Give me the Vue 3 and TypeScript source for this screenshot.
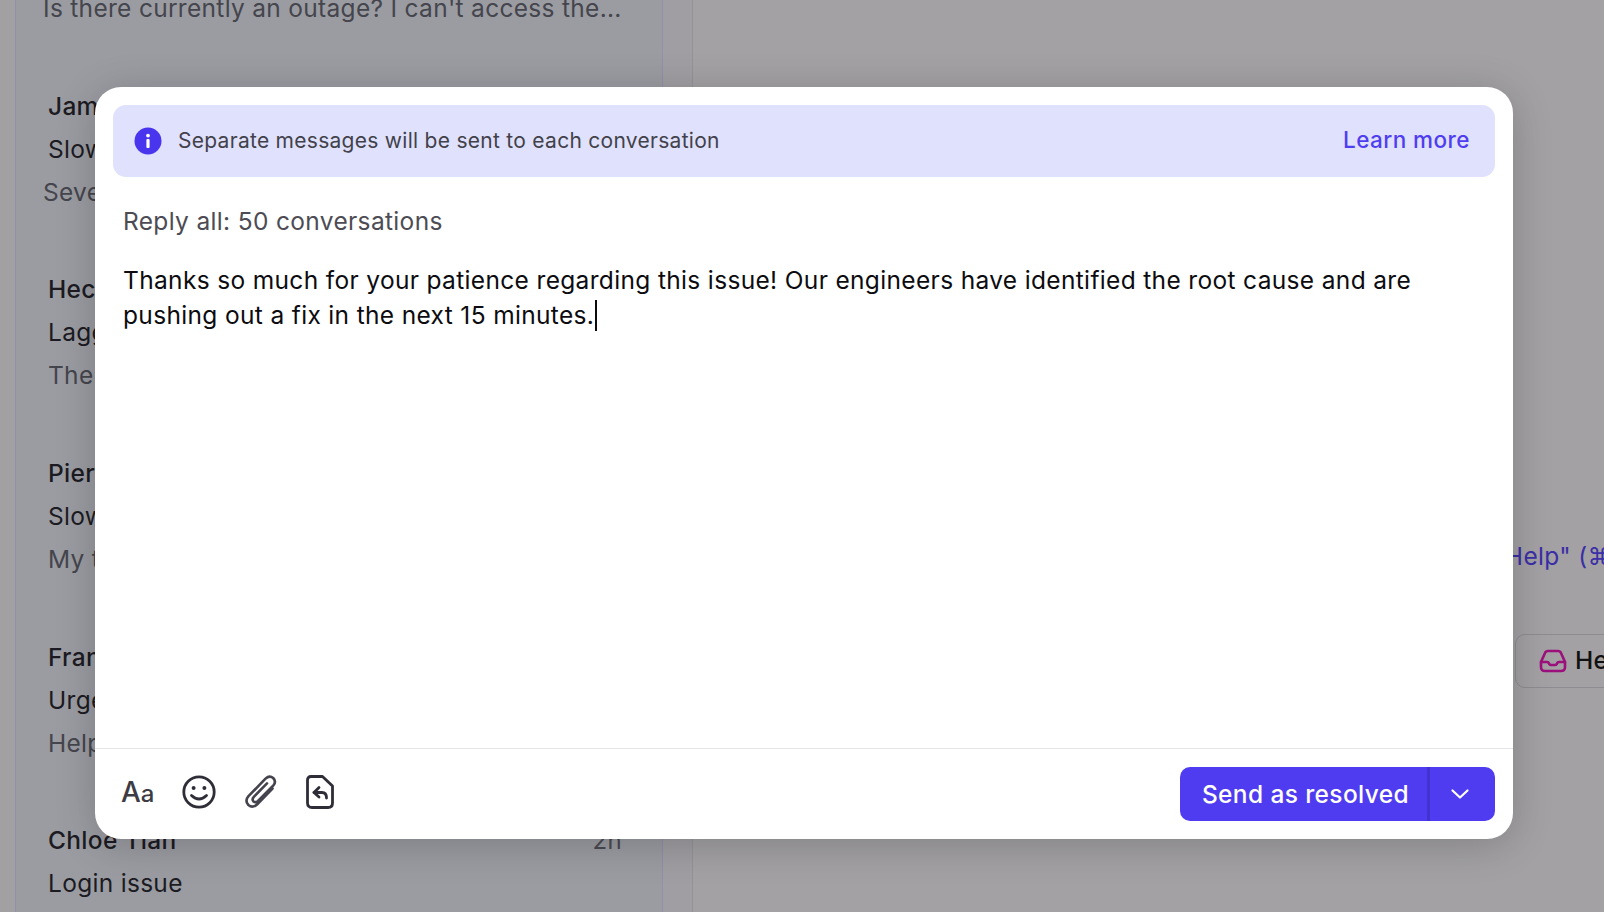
<script setup lang="ts">
interface Row {
  name: string
  subject: string
  preview: string
  time: string
  shifted: boolean
}

const rows: Row[] = [
  { name: 'Marta Lind', subject: 'Site down', preview: "Is there currently an outage? I can't access the...", time: '1h', shifted: true },
  { name: 'James Ortiz', subject: 'Slow loading', preview: 'Several pages are taking a long time to load', time: '1h', shifted: true },
  { name: 'Hector Ruiz', subject: 'Lagging', preview: 'The dashboard keeps lagging for our team', time: '1h', shifted: false },
  { name: 'Pierre Blanc', subject: 'Slow site', preview: 'My team cannot open the reports page', time: '2h', shifted: false },
  { name: 'Frank Meyer', subject: 'Urgent', preview: 'Help! Nothing is loading on our side', time: '2h', shifted: false },
  { name: 'Chloe Tian', subject: 'Login issue', preview: 'I am unable to log in this morning', time: '2h', shifted: false },
]
</script>

<template>
  <div class="page">
    <div class="rail"></div>
    <section class="list">
      <article v-for="row in rows" :key="row.name" class="row">
        <div class="row-head">
          <span class="name">{{ row.name }}</span>
          <span class="time">{{ row.time }}</span>
        </div>
        <div class="subject">{{ row.subject }}</div>
        <div class="preview" :class="{ shifted: row.shifted }">{{ row.preview }}</div>
      </article>
    </section>
    <div class="gutter"></div>
    <main class="detail">
      <p class="hint">Search for "Help" (⌘K)</p>
      <div class="chip">
        <svg class="chip-icon" width="28" height="24" viewBox="0 0 28 24" fill="none" stroke="#9c107c" stroke-width="2.6" stroke-linejoin="round" stroke-linecap="round">
          <path d="M2 13 L6 4 Q6.8 2 9 2 H19 Q21.2 2 22 4 L26 13 V18 Q26 22 22 22 H6 Q2 22 2 18 Z" />
          <path d="M2 13 H8 Q9.5 13 10 14.5 Q10.5 16 12 16 H16 Q17.5 16 18 14.5 Q18.5 13 20 13 H26" />
        </svg>
        <span class="chip-label">Help</span>
      </div>
    </main>

    <div class="modal">
      <div class="banner">
        <svg class="info" width="28" height="28" viewBox="0 0 28 28">
          <circle cx="14" cy="14" r="13.5" fill="#4a35ee" />
          <circle cx="14" cy="8.6" r="1.9" fill="#fff" />
          <rect x="12.4" y="12" width="3.2" height="9" rx="1" fill="#fff" />
        </svg>
        <span class="banner-text">Separate messages will be sent to each conversation</span>
        <a class="learn">Learn more</a>
      </div>
      <div class="reply-label">Reply all: 50 conversations</div>
      <div class="message">Thanks so much for your patience regarding this issue! Our engineers have identified the root cause and are pushing out a fix in the next 15 minutes.<span class="caret"></span></div>
      <footer class="footer">
        <div class="tools">
          <span class="aa"><span class="big">A</span><span class="small">a</span></span>
          <svg width="34" height="34" viewBox="0 0 34 34" fill="none" stroke="#2f2d37" stroke-width="2.8" stroke-linecap="round">
            <circle cx="17" cy="17" r="15.2" />
            <circle cx="11.6" cy="13" r="2" fill="#2f2d37" stroke="none" />
            <circle cx="22.4" cy="13" r="2" fill="#2f2d37" stroke="none" />
            <path d="M9.5 20.5 Q17 27.5 24.5 20.5" />
          </svg>
          <svg width="32" height="34" viewBox="0 0 32 34" fill="none" stroke="#45434d" stroke-width="2.6" stroke-linecap="round" stroke-linejoin="round">
            <path d="M27.5 13.5 L12 29.5 Q7.5 33.5 3.4 30 Q-0.5 25.8 3.5 21.2 L20.5 3.6 Q24.5 0 28.2 3 Q31.6 6.6 28.4 10.4 L13 26 Q10.4 28.2 8.4 26.4 Q6.6 24.2 8.8 21.8 L22 8.4" />
          </svg>
          <svg width="28" height="34" viewBox="0 0 28 34" fill="none" stroke="#2f2d37" stroke-width="2.8" stroke-linecap="round" stroke-linejoin="round">
            <path d="M5 1.5 H16.5 L26.5 11 V28 Q26.5 32.5 22 32.5 H6 Q1.5 32.5 1.5 28 V5 Q1.5 1.5 5 1.5 Z" />
            <path d="M13 12.5 L8 17.5 L13 22" />
            <path d="M8 17.5 H16 Q20.5 17.5 20.5 23" />
          </svg>
        </div>
        <div class="send">
          <button class="send-main" type="button">Send as resolved</button>
          <button class="send-more" type="button" aria-label="More send options">
            <svg width="20" height="12" viewBox="0 0 20 12" fill="none" stroke="#fff" stroke-width="2.2" stroke-linecap="round" stroke-linejoin="round">
              <path d="M2.5 2.5 L10 9.5 L17.5 2.5" />
            </svg>
          </button>
        </div>
      </footer>
    </div>
  </div>
</template>

<style>
html, body {
  margin: 0;
  overflow: hidden;
}
</style>

<style scoped>
.page {
  position: relative;
  display: flex;
  width: 100%;
  height: 100vh;
  overflow: hidden;
  background: #a3a1a4;
  font-family: Inter, "Liberation Sans", sans-serif;
  font-optical-sizing: none;
  letter-spacing: 0.34px;
  color: #1c1b22;
}
.rail {
  width: 15px;
  flex: none;
  background: #a2a0a1;
}
.list {
  width: 648px;
  flex: none;
  box-sizing: border-box;
  margin: 0;
  padding: 0 40px 0 32px;
  border-left: 1px solid #8f91ad;
  border-right: 1px solid #8f91ad;
  background: #9b9ca2;
  display: flex;
  flex-direction: column;
  gap: 54.7px;
}
.row {
  flex: none;
  font-size: 24.5px;
  line-height: 43px;
  letter-spacing: 0.3px;
  white-space: nowrap;
}
.row:first-child {
  margin-top: -99px;
}
.row-head {
  display: flex;
  justify-content: space-between;
}
.name {
  font-weight: 500;
}
.time {
  color: #4a4a52;
  font-size: 24px;
}
.preview {
  color: #45454d;
}
.preview.shifted {
  margin-left: -5px;
}
.gutter {
  width: 29px;
  flex: none;
  border-right: 1px solid #959397;
  background: #a09ea2;
}
.detail {
  flex: 1;
  min-width: 0;
  padding-left: 669px;
  white-space: nowrap;
  font-size: 24.5px;
}
.hint {
  margin: 534px 0 0;
  line-height: 44px;
  color: #3a2fa6;
}
.chip {
  display: flex;
  align-items: center;
  gap: 8px;
  width: 200px;
  height: 54px;
  box-sizing: border-box;
  margin: 56px 0 0 153px;
  padding-left: 23px;
  border: 1px solid #8e8c90;
  border-radius: 10px;
  color: #111;
  font-weight: 500;
}
.chip-label {
  margin-top: -2px;
}
.modal {
  position: absolute;
  left: 95px;
  top: 87px;
  width: 1418px;
  height: 752px;
  display: flex;
  flex-direction: column;
  box-sizing: border-box;
  padding-top: 18px;
  background: #fff;
  border-radius: 26px;
  box-shadow: 0 6px 40px rgba(0, 0, 0, 0.2);
}
.banner {
  display: flex;
  align-items: center;
  height: 72px;
  flex: none;
  margin: 0 18px;
  padding: 0 25px 0 21px;
  background: #e0e1fc;
  border-radius: 13px;
  font-size: 21px;
  letter-spacing: 0.28px;
}
.info {
  flex: none;
  margin-right: 16px;
}
.banner-text {
  flex: 1;
  color: #42414b;
  margin-top: -2px;
}
.learn {
  color: #4f3ef0;
  font-size: 22.5px;
  font-weight: 500;
  letter-spacing: 0.45px;
  margin-top: -3px;
}
.reply-label {
  margin: 26px 28px 0;
  font-size: 24.5px;
  line-height: 36px;
  color: #4d4c55;
}
.message {
  flex: 1;
  margin: 24px 28px 0;
  font-size: 24.5px;
  line-height: 35px;
  color: #0c0c10;
}
.caret {
  display: inline-block;
  width: 2px;
  height: 31px;
  margin-left: 1px;
  vertical-align: -7px;
  background: #0c0c10;
}
.footer {
  display: flex;
  align-items: center;
  justify-content: space-between;
  flex: none;
  height: 91px;
  box-sizing: border-box;
  padding: 0 18px 0 26px;
  border-top: 1px solid #e4e5ea;
}
.tools {
  display: flex;
  align-items: center;
  gap: 29px;
  margin-top: -4px;
}
.aa {
  width: 32px;
  color: #3d3c44;
  line-height: 1;
  white-space: nowrap;
  font-weight: 500;
  letter-spacing: 0;
}
.big {
  font-size: 28px;
}
.small {
  font-size: 24px;
}
.send {
  display: flex;
  height: 54px;
  border-radius: 10px;
  overflow: hidden;
  background: #4f3cf1;
}
.send-main,
.send-more {
  border: 0;
  background: transparent;
  color: #fff;
  font: inherit;
  letter-spacing: 0.38px;
}
.send-main {
  width: 250px;
  padding: 0 0 0 4px;
  font-size: 24.5px;
  font-weight: 500;
  border-right: 3px solid #4232cf;
}
.send-more {
  width: 65px;
  display: flex;
  align-items: center;
  justify-content: center;
  padding: 0 6px 0 0;
}
</style>
